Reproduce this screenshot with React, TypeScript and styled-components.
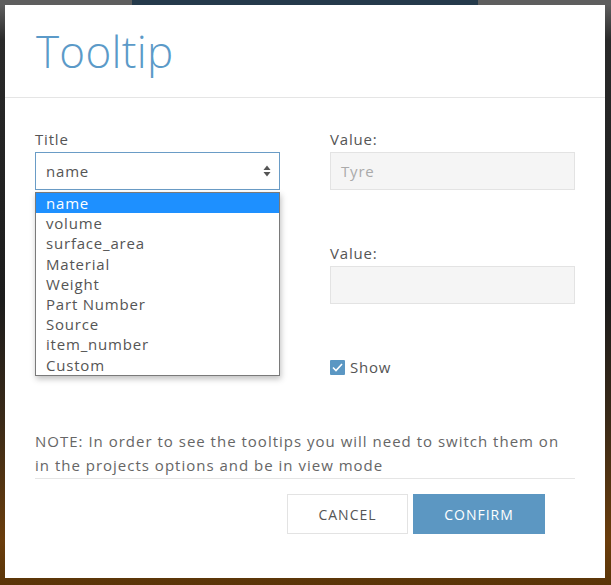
import React from "react";
import styled, { createGlobalStyle } from "styled-components";

const GlobalStyle = createGlobalStyle`
  html, body { margin: 0; padding: 0; }
  body {
    width: 611px;
    height: 585px;
    overflow: hidden;
    font-family: "Open Sans", "Noto Sans", sans-serif;
    background:
      linear-gradient(to right, transparent 132px, #253a4b 132px, #253a4b 478px, transparent 478px) top / 100% 5px no-repeat,
      linear-gradient(to bottom, #5e5e5e 0, #5e5e5e 5px, #2a2a2a 40px, #1c1c1c 300px, #3a2a18 420px, #6a3d0c 540px, #5a3508 585px);
  }
`;

const Page = styled.div`
  width: 611px;
  height: 585px;
  box-sizing: border-box;
  padding: 5px 6px 7px 5px;
  display: flex;
`;

const Modal = styled.div`
  flex: 1;
  background: #fff;
  display: flex;
  flex-direction: column;
`;

const Header = styled.div`
  height: 93px;
  box-sizing: border-box;
  border-bottom: 1px solid #e5e5e5;
  padding: 16px 0 0 31px;
`;

const Title = styled.h1`
  margin: 0;
  font-family: "Open Sans", sans-serif;
  font-weight: 300;
  font-size: 44px;
  line-height: 60px;
  color: #5b9ac8;
  letter-spacing: 0.3px;
`;

const Body = styled.div`
  padding: 31px 30px 0 30px;
  display: flex;
  flex-direction: column;
`;

const FormGrid = styled.div`
  display: grid;
  grid-template-columns: 245px 245px;
  grid-template-rows: 114px 114px 72px;
  column-gap: 50px;
`;

const Field = styled.div`
  position: relative;
  display: flex;
  flex-direction: column;
`;

const Label = styled.label`
  font-size: 15px;
  color: #555;
  line-height: 20px;
  height: 23px;
  letter-spacing: 0.8px;
`;

const SelectBox = styled.div`
  height: 38px;
  box-sizing: border-box;
  border: 1px solid #6a9cc6;
  background: #fff;
  display: flex;
  align-items: center;
  justify-content: space-between;
  padding: 0 8px 0 10px;
  font-size: 15px;
  color: #555;
  letter-spacing: 0.8px;
`;

const Arrows = styled.svg`
  width: 8px;
  height: 12px;
`;

const Input = styled.div`
  height: 38px;
  box-sizing: border-box;
  border: 1px solid #e3e3e3;
  background: #f5f5f5;
  display: flex;
  align-items: center;
  padding: 0 10px;
  font-size: 15px;
  color: #aaa;
  letter-spacing: 0.8px;
`;

const CheckRow = styled.div`
  display: flex;
  align-items: center;
  gap: 5px;
  height: 20px;
  font-size: 15px;
  color: #555;
  letter-spacing: 0.8px;
`;

const CheckBox = styled.span`
  width: 15px;
  height: 15px;
  background: #5b97c3;
  border-radius: 1px;
  display: flex;
  align-items: center;
  justify-content: center;
`;

const DropList = styled.ul`
  position: absolute;
  top: 63px;
  left: 0;
  width: 245px;
  margin: 0;
  padding: 0;
  list-style: none;
  box-sizing: border-box;
  border: 1px solid #7a7a7a;
  background: #fff;
  box-shadow: 1px 3px 6px rgba(0, 0, 0, 0.25);
  z-index: 2;
`;

const DropItem = styled.li<{ $active?: boolean }>`
  height: 20.2px;
  line-height: 20px;
  padding-left: 10px;
  font-size: 15px;
  letter-spacing: 0.8px;
  color: ${(p) => (p.$active ? "#fff" : "#555")};
  background: ${(p) => (p.$active ? "#1e90ff" : "transparent")};
`;

const Note = styled.p`
  margin: 0;
  padding: 0 0 1px 0;
  font-size: 15px;
  line-height: 24px;
  color: #666;
  letter-spacing: 1px;
  border-bottom: 1px solid #e5e5e5;
`;

const Footer = styled.div`
  display: flex;
  justify-content: flex-end;
  gap: 5px;
  padding: 15px 60px 0 0;
`;

const Button = styled.button<{ $primary?: boolean }>`
  height: 40px;
  padding: 0;
  width: ${(p) => (p.$primary ? "132px" : "121px")};
  border: 1px solid ${(p) => (p.$primary ? "#5c97c2" : "#e3e3e3")};
  background: ${(p) => (p.$primary ? "#5c97c2" : "#fff")};
  color: ${(p) => (p.$primary ? "#fff" : "#555")};
  font-family: "Open Sans", sans-serif;
  font-size: 14px;
  letter-spacing: 1px;
  text-transform: uppercase;
  cursor: pointer;
`;

const options = [
  "name",
  "volume",
  "surface_area",
  "Material",
  "Weight",
  "Part Number",
  "Source",
  "item_number",
  "Custom",
];

const UpDown = () => (
  <Arrows viewBox="0 0 8 12">
    <path d="M4 0.5 L7.5 5 H0.5 Z" fill="#555" />
    <path d="M4 11.5 L7.5 7 H0.5 Z" fill="#555" />
  </Arrows>
);

export default function App() {
  return (
    <>
      <GlobalStyle />
      <Page>
        <Modal>
          <Header>
            <Title>Tooltip</Title>
          </Header>
          <Body>
            <FormGrid>
              <Field>
                <Label>Title</Label>
                <SelectBox>
                  <span>name</span>
                  <UpDown />
                </SelectBox>
                <DropList>
                  {options.map((o, i) => (
                    <DropItem key={o} $active={i === 0}>
                      {o}
                    </DropItem>
                  ))}
                </DropList>
              </Field>
              <Field>
                <Label>Value:</Label>
                <Input>Tyre</Input>
              </Field>
              <Field />
              <Field>
                <Label>Value:</Label>
                <Input />
              </Field>
              <Field />
              <Field>
                <CheckRow>
                  <CheckBox>
                    <svg width="11" height="9" viewBox="0 0 11 9">
                      <path d="M1 4.5 L4 7.5 L10 1" stroke="#fff" strokeWidth="1.6" fill="none" />
                    </svg>
                  </CheckBox>
                  Show
                </CheckRow>
              </Field>
            </FormGrid>
            <Note>
              NOTE: In order to see the tooltips you will need to switch them on in the projects options and be in view
              mode
            </Note>
          </Body>
          <Footer>
            <Button>Cancel</Button>
            <Button $primary>Confirm</Button>
          </Footer>
        </Modal>
      </Page>
    </>
  );
}
